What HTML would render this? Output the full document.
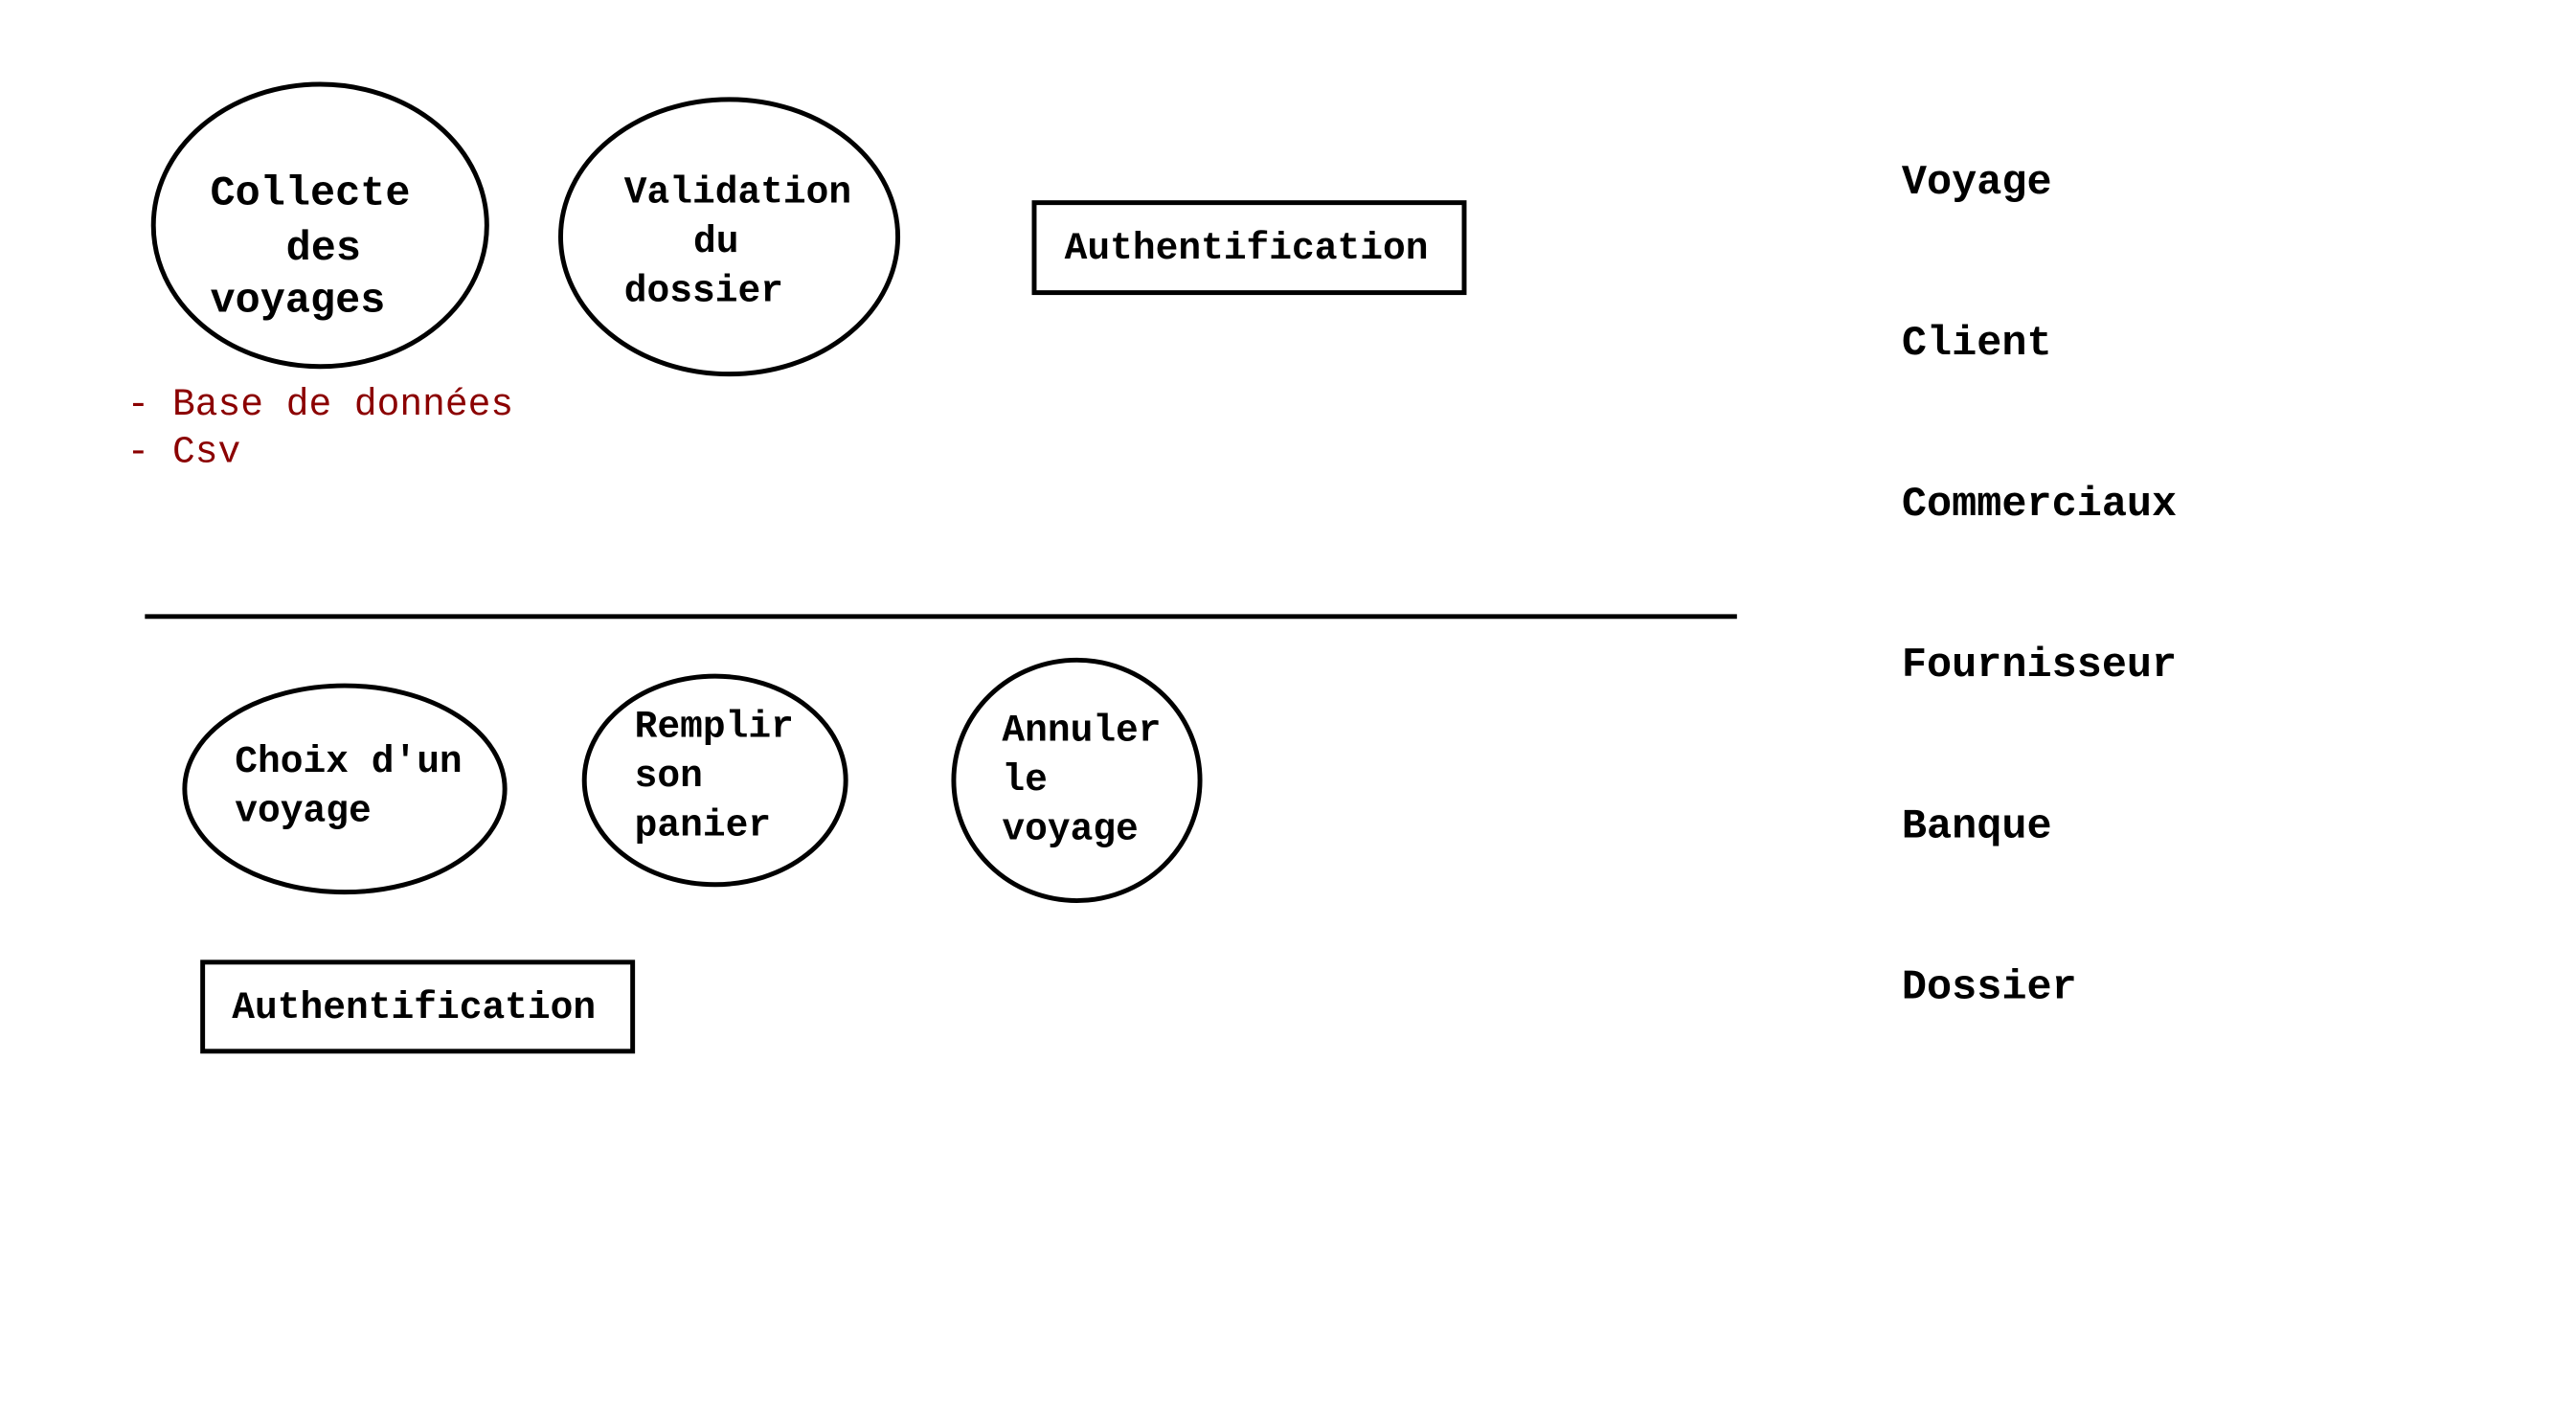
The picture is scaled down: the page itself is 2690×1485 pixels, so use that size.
<!DOCTYPE html>
<html><head><meta charset="utf-8"><style>
html,body{margin:0;padding:0;background:#fff;width:2690px;height:1485px;overflow:hidden;position:relative}
#w{position:absolute;left:0;top:0;width:2690px;height:1485px;transform:scale(0.989);transform-origin:0 0}
.t{position:absolute;font-family:"Liberation Mono",monospace;font-weight:bold;line-height:1;white-space:pre;color:#000;margin-top:6px}
.f44{font-size:44px}.f40{font-size:40px}
.r{font-weight:normal;color:#8b0000}
svg{position:absolute;left:0;top:0}
</style></head><body><div id="w">
<svg width="2690" height="1485" fill="none" stroke="#000" stroke-width="5">
<ellipse cx="338" cy="238" rx="176" ry="149"/>
<ellipse cx="770" cy="250" rx="178" ry="145"/>
<rect x="1092" y="214" width="454" height="95"/>
<line x1="153" y1="651" x2="1834" y2="651"/>
<ellipse cx="364" cy="833" rx="169" ry="109"/>
<ellipse cx="755" cy="824" rx="138" ry="110"/>
<ellipse cx="1137" cy="824" rx="130" ry="127"/>
<rect x="214" y="1016" width="454" height="94"/>
</svg>
<div class="t f44" style="left:222px;top:177px">Collecte</div>
<div class="t f44" style="left:302px;top:235px">des</div>
<div class="t f44" style="left:222px;top:290px">voyages</div>
<div class="t f40" style="left:659px;top:179px">Validation</div>
<div class="t f40" style="left:732px;top:231px">du</div>
<div class="t f40" style="left:659px;top:283px">dossier</div>
<div class="t f40" style="left:1124px;top:238px">Authentification</div>
<div class="t f40 r" style="left:134px;top:403px">- Base de données</div>
<div class="t f40 r" style="left:134px;top:453px">- Csv</div>
<div class="t f40" style="left:248px;top:780px">Choix d'un</div>
<div class="t f40" style="left:248px;top:832px">voyage</div>
<div class="t f40" style="left:670px;top:743px">Remplir</div>
<div class="t f40" style="left:670px;top:795px">son</div>
<div class="t f40" style="left:670px;top:847px">panier</div>
<div class="t f40" style="left:1058px;top:747px">Annuler</div>
<div class="t f40" style="left:1058px;top:799px">le</div>
<div class="t f40" style="left:1058px;top:851px">voyage</div>
<div class="t f40" style="left:245px;top:1040px">Authentification</div>
<div class="t f44" style="left:2008px;top:165px">Voyage</div>
<div class="t f44" style="left:2008px;top:335px">Client</div>
<div class="t f44" style="left:2008px;top:505px">Commerciaux</div>
<div class="t f44" style="left:2008px;top:675px">Fournisseur</div>
<div class="t f44" style="left:2008px;top:845px">Banque</div>
<div class="t f44" style="left:2008px;top:1015px">Dossier</div>
</div></body></html>
